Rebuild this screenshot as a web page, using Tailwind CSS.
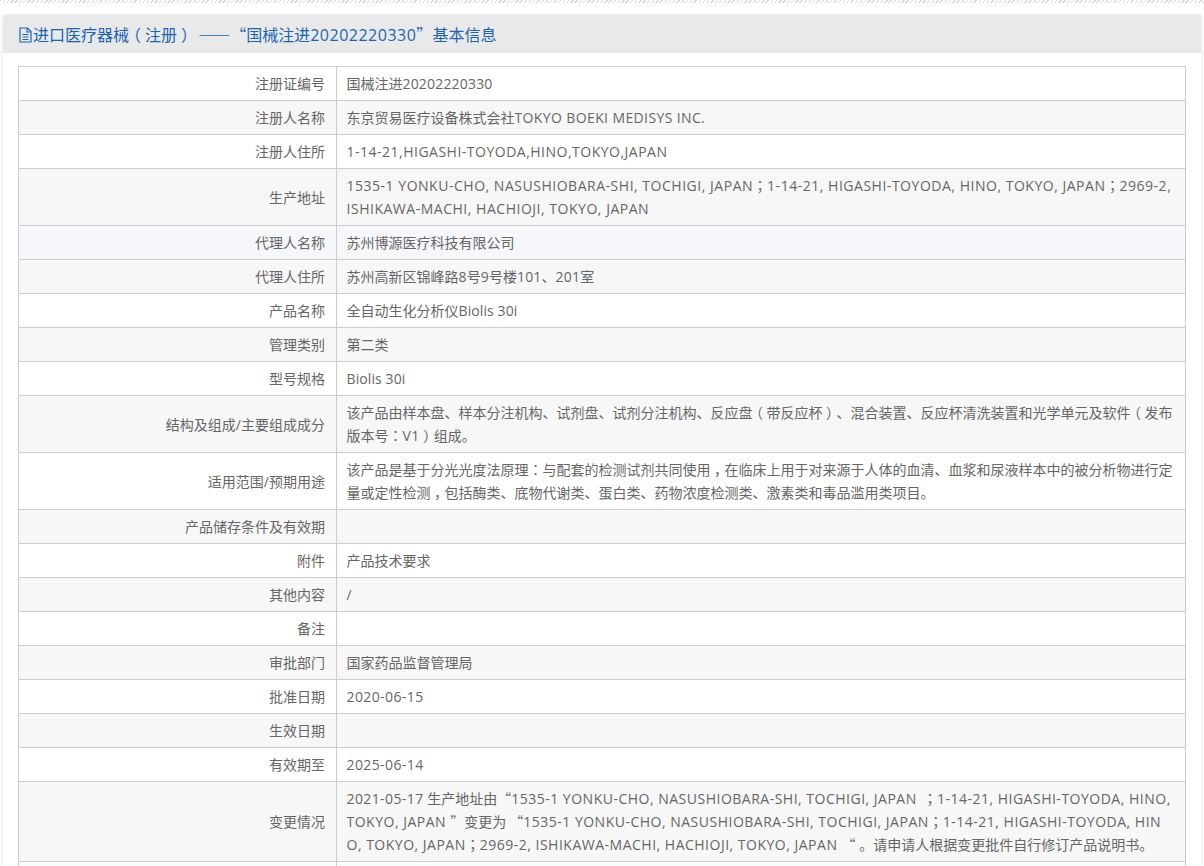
<!DOCTYPE html>
<html lang="zh-CN">
<head>
    <meta charset="UTF-8">
    <title>进口医疗器械（注册）</title>
    <script src="https://cdn.jsdelivr.net/npm/@tailwindcss/browser@4"></script>
</head>
<body class="h-[866px] overflow-hidden bg-white text-[14px] leading-[23px] text-[#666] font-['Open_Sans','Noto_Sans_CJK_SC',sans-serif]">
    <!-- hatch strip -->
    <div class="h-[3px] bg-[repeating-linear-gradient(135deg,#d8d8d8_0,#d8d8d8_1px,#fff_1px,#fff_3px)]"></div>
    <div class="mx-[3px] mt-[12px] bg-white shadow-[0_0_4px_rgba(0,0,0,0.12)]">
        <h2 class="flex h-[38px] items-center gap-px bg-[#e9e9e9] pl-[16px] pt-px text-[16px] font-normal text-[#1a66b3]">
            <svg class="h-[16px] w-[13px]" viewBox="0 0 13 16" fill="none" stroke="#1a66b3" stroke-width="1.2">
                <path d="M1 1h7.500L12 4.500V15H1z"/>
                <path d="M8 1v4h4M3.500 7.500h6M3.500 10h6M3.500 12.500h6"/>
            </svg>
            <span class="whitespace-pre">进口医疗器械<span class="inline-block w-[16px] text-center [font-feature-settings:'halt']">（</span>注册<span class="inline-block w-[16px] text-center [font-feature-settings:'halt']">）</span> <span class="ml-px font-['Noto_Sans_CJK_SC']">——“</span>国械注进<span class="tracking-[0.5px]">20202220330</span><span class="font-['Noto_Sans_CJK_SC']">”</span>基本信息</span>
        </h2>
        <div class="px-[15px] pt-[13px]">
            <table class="w-[1168px] table-fixed border-collapse border border-[#ccc]">
                <colgroup><col class="w-[318px]"><col></colgroup>
                <tbody>
                    <tr>
                        <td class="border border-[#ccc] pl-[10px] pr-[11px] py-[5px] text-right">注册证编号</td>
                        <td class="border border-[#ccc] pl-[9.5px] pr-[10px] py-[5px]">国械注进<span class="tracking-[0.18px]">20202220330</span></td>
                    </tr>
                    <tr class="bg-[#f7f7f7]">
                        <td class="border border-[#ccc] pl-[10px] pr-[11px] py-[5px] text-right">注册人名称</td>
                        <td class="border border-[#ccc] pl-[9.5px] pr-[10px] py-[5px]">东京贸易医疗设备株式会社<span class="tracking-[0.38px]">TOKYO BOEKI MEDISYS INC.</span></td>
                    </tr>
                    <tr>
                        <td class="border border-[#ccc] pl-[10px] pr-[11px] py-[5px] text-right">注册人住所</td>
                        <td class="border border-[#ccc] pl-[9.5px] pr-[10px] py-[5px]"><span class="tracking-[0.5px]">1-14-21,HIGASHI-TOYODA,HINO,TOKYO,JAPAN</span></td>
                    </tr>
                    <tr class="bg-[#f7f7f7]">
                        <td class="border border-[#ccc] pl-[10px] pr-[11px] py-[5px] text-right">生产地址</td>
                        <td class="border border-[#ccc] pl-[9.5px] pr-[10px] py-[5px]"><span class="tracking-[0.52px]">1535-1 YONKU-CHO, NASUSHIOBARA-SHI, TOCHIGI, JAPAN</span><span lang="zh-TW" class="font-['Noto_Sans_CJK_TC']">；</span><span class="tracking-[0.52px]">1-14-21, HIGASHI-TOYODA, HINO, TOKYO, JAPAN</span><span lang="zh-TW" class="font-['Noto_Sans_CJK_TC']">；</span><span class="tracking-[0.52px]">2969-2,<br>ISHIKAWA-MACHI, HACHIOJI, TOKYO, JAPAN</span></td>
                    </tr>
                    <tr class="bg-[#f5f7fb]">
                        <td class="border border-[#ccc] pl-[10px] pr-[11px] py-[5px] text-right">代理人名称</td>
                        <td class="border border-[#ccc] pl-[9.5px] pr-[10px] py-[5px]">苏州博源医疗科技有限公司</td>
                    </tr>
                    <tr class="bg-[#f7f7f7]">
                        <td class="border border-[#ccc] pl-[10px] pr-[11px] py-[5px] text-right">代理人住所</td>
                        <td class="border border-[#ccc] pl-[9.5px] pr-[10px] py-[5px]">苏州高新区锦峰路<span class="tracking-[0.2px]">8</span>号<span class="tracking-[0.2px]">9</span>号楼<span class="tracking-[0.2px]">101</span>、<span class="tracking-[0.2px]">201</span>室</td>
                    </tr>
                    <tr>
                        <td class="border border-[#ccc] pl-[10px] pr-[11px] py-[5px] text-right">产品名称</td>
                        <td class="border border-[#ccc] pl-[9.5px] pr-[10px] py-[5px]">全自动生化分析仪<span class="tracking-[0.1px]">Biolis 30i</span></td>
                    </tr>
                    <tr class="bg-[#f7f7f7]">
                        <td class="border border-[#ccc] pl-[10px] pr-[11px] py-[5px] text-right">管理类别</td>
                        <td class="border border-[#ccc] pl-[9.5px] pr-[10px] py-[5px]">第二类</td>
                    </tr>
                    <tr>
                        <td class="border border-[#ccc] pl-[10px] pr-[11px] py-[5px] text-right">型号规格</td>
                        <td class="border border-[#ccc] pl-[9.5px] pr-[10px] py-[5px]"><span class="tracking-[0.1px]">Biolis 30i</span></td>
                    </tr>
                    <tr class="bg-[#f7f7f7]">
                        <td class="border border-[#ccc] pl-[10px] pr-[11px] py-[5px] text-right">结构及组成/主要组成成分</td>
                        <td class="border border-[#ccc] pl-[9.5px] pr-[10px] py-[5px]">该产品由样本盘、样本分注机构、试剂盘、试剂分注机构、反应盘<span class="inline-block w-[14px] text-center [font-feature-settings:'halt']">（</span>带反应杯<span class="inline-block w-[14px] text-center [font-feature-settings:'halt']">）</span>、混合装置、反应杯清洗装置和光学单元及软件<span class="inline-block w-[14px] text-center [font-feature-settings:'halt']">（</span>发布<br>版本号<span lang="zh-TW" class="font-['Noto_Sans_CJK_TC']">：</span><span class="tracking-[0.5px]">V1</span><span class="inline-block w-[14px] text-center [font-feature-settings:'halt']">）</span>组成。</td>
                    </tr>
                    <tr>
                        <td class="border border-[#ccc] pl-[10px] pr-[11px] py-[5px] text-right">适用范围/预期用途</td>
                        <td class="border border-[#ccc] pl-[9.5px] pr-[10px] py-[5px]">该产品是基于分光光度法原理<span lang="zh-TW" class="font-['Noto_Sans_CJK_TC']">：</span>与配套的检测试剂共同使用<span class="inline-block w-[14px] text-center [font-feature-settings:'halt']">，</span>在临床上用于对来源于人体的血清、血浆和尿液样本中的被分析物进行定<br>量或定性检测<span class="inline-block w-[14px] text-center [font-feature-settings:'halt']">，</span>包括酶类、底物代谢类、蛋白类、药物浓度检测类、激素类和毒品滥用类项目。</td>
                    </tr>
                    <tr class="bg-[#f7f7f7]">
                        <td class="border border-[#ccc] pl-[10px] pr-[11px] py-[5px] text-right">产品储存条件及有效期</td>
                        <td class="border border-[#ccc] pl-[9.5px] pr-[10px] py-[5px]">&nbsp;</td>
                    </tr>
                    <tr>
                        <td class="border border-[#ccc] pl-[10px] pr-[11px] py-[5px] text-right">附件</td>
                        <td class="border border-[#ccc] pl-[9.5px] pr-[10px] py-[5px]">产品技术要求</td>
                    </tr>
                    <tr class="bg-[#f7f7f7]">
                        <td class="border border-[#ccc] pl-[10px] pr-[11px] py-[5px] text-right">其他内容</td>
                        <td class="border border-[#ccc] pl-[9.5px] pr-[10px] py-[5px]">/</td>
                    </tr>
                    <tr>
                        <td class="border border-[#ccc] pl-[10px] pr-[11px] py-[5px] text-right">备注</td>
                        <td class="border border-[#ccc] pl-[9.5px] pr-[10px] py-[5px]">&nbsp;</td>
                    </tr>
                    <tr class="bg-[#f7f7f7]">
                        <td class="border border-[#ccc] pl-[10px] pr-[11px] py-[5px] text-right">审批部门</td>
                        <td class="border border-[#ccc] pl-[9.5px] pr-[10px] py-[5px]">国家药品监督管理局</td>
                    </tr>
                    <tr>
                        <td class="border border-[#ccc] pl-[10px] pr-[11px] py-[5px] text-right">批准日期</td>
                        <td class="border border-[#ccc] pl-[9.5px] pr-[10px] py-[5px]"><span class="tracking-[0.4px]">2020-06-15</span></td>
                    </tr>
                    <tr class="bg-[#f7f7f7]">
                        <td class="border border-[#ccc] pl-[10px] pr-[11px] py-[5px] text-right">生效日期</td>
                        <td class="border border-[#ccc] pl-[9.5px] pr-[10px] py-[5px]">&nbsp;</td>
                    </tr>
                    <tr>
                        <td class="border border-[#ccc] pl-[10px] pr-[11px] py-[5px] text-right">有效期至</td>
                        <td class="border border-[#ccc] pl-[9.5px] pr-[10px] py-[5px]"><span class="tracking-[0.4px]">2025-06-14</span></td>
                    </tr>
                    <tr class="bg-[#f7f7f7]">
                        <td class="border border-[#ccc] pl-[10px] pr-[11px] py-[5px] text-right">变更情况</td>
                        <td class="border border-[#ccc] pl-[9.5px] pr-[10px] py-[5px]"><span class="tracking-[0.4px]">2021-05-17</span> 生产地址由<span class="font-['Noto_Sans_CJK_SC']">“</span><span class="tracking-[0.5px]">1535-1 YONKU-CHO, NASUSHIOBARA-SHI, TOCHIGI, JAPAN </span><span lang="zh-TW" class="ml-[2px] font-['Noto_Sans_CJK_TC']">；</span><span class="tracking-[0.5px]">1-14-21, HIGASHI-TOYODA, HINO,<br>TOKYO, JAPAN </span><span class="font-['Noto_Sans_CJK_SC']">”</span>变更为<span class="ml-[3px] font-['Noto_Sans_CJK_SC']">“</span><span class="tracking-[0.5px]">1535-1 YONKU-CHO, NASUSHIOBARA-SHI, TOCHIGI, JAPAN</span><span lang="zh-TW" class="font-['Noto_Sans_CJK_TC']">；</span><span class="tracking-[0.5px]">1-14-21, HIGASHI-TOYODA, HIN<br>O, TOKYO, JAPAN</span><span lang="zh-TW" class="font-['Noto_Sans_CJK_TC']">；</span><span class="tracking-[0.5px]">2969-2, ISHIKAWA-MACHI, HACHIOJI, TOKYO, JAPAN </span><span class="font-['Noto_Sans_CJK_SC']">“</span> 。请申请人根据变更批件自行修订产品说明书。</td>
                    </tr>
                    <tr>
                        <td class="border border-[#ccc] pl-[10px] pr-[11px] py-[5px] text-right">&nbsp;</td>
                        <td class="border border-[#ccc] pl-[9.5px] pr-[10px] py-[5px]">&nbsp;</td>
                    </tr>
                </tbody>
            </table>
        </div>
    </div>
</body>
</html>
